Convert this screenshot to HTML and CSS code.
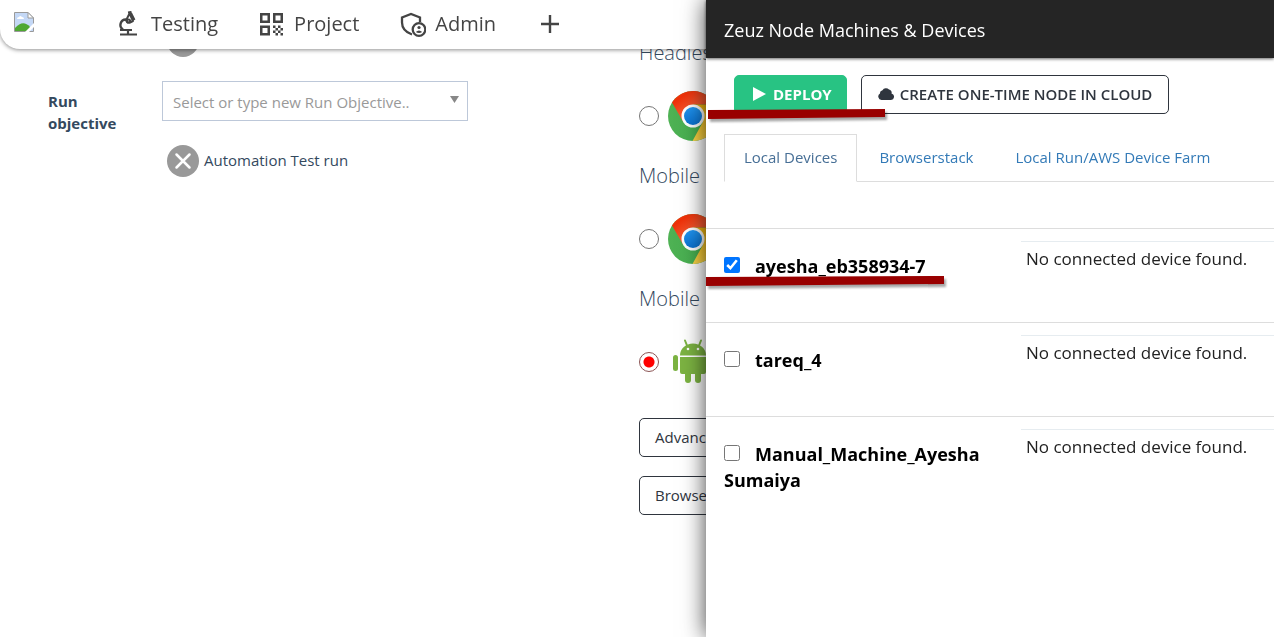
FILE: index.html
```html
<!DOCTYPE html>
<html lang="en">
<head>
<meta charset="utf-8">
<title>Zeuz Node Machines &amp; Devices</title>
<link rel="stylesheet" href="styles.css">
</head>
<body>
<svg class="defs" width="0" height="0" aria-hidden="true">
  <defs>
    <linearGradient id="red" x1="0" y1="0" x2="1" y2="1"><stop offset="0" stop-color="#ff4a1c"/><stop offset="0.2" stop-color="#ee3008"/><stop offset="0.5" stop-color="#f4572e"/></linearGradient>
    <linearGradient id="green" x1="0" y1="0" x2="1" y2="0"><stop offset="0" stop-color="#4fb254"/><stop offset="0.6" stop-color="#46ae50"/><stop offset="1" stop-color="#10964c"/></linearGradient>
    <linearGradient id="yellow" x1="0" y1="0" x2="0" y2="1"><stop offset="0" stop-color="#f2b50c"/><stop offset="1" stop-color="#fcd64a"/></linearGradient>
    <linearGradient id="blue" x1="0" y1="0" x2="0" y2="1"><stop offset="0" stop-color="#2196f3"/><stop offset="1" stop-color="#0b72d0"/></linearGradient>
    <symbol id="chrome" viewBox="0 0 50 50">
      <circle cx="25" cy="25" r="25" fill="url(#green)"/>
      <path d="M25 13.500H47.200A25 25 0 0 1 24.500 50L35 30.700Z" fill="url(#yellow)"/>
      <path d="M4 11.500A25 25 0 0 1 47.200 13.500H25L15 30.500Z" fill="url(#red)"/>
      <circle cx="25" cy="25" r="11.500" fill="#fff"/>
      <circle cx="25" cy="25" r="9" fill="url(#blue)"/>
    </symbol>
    <symbol id="remove" viewBox="0 0 32 32">
      <circle cx="16" cy="16" r="16" fill="#999"/>
      <path d="M9.500 9.500L22.500 22.500M22.500 9.500L9.500 22.500" stroke="#fff" stroke-width="2.500" stroke-linecap="round"/>
    </symbol>
  </defs>
</svg>

<header class="topbar">
  <a class="brand" href="#" aria-label="Home">
    <svg width="20" height="20" viewBox="0 0 20 20">
      <path d="M.500 .500H14L19.500 6V19.500H.500Z" fill="#c4d8f6" stroke="#9a9a9a"/>
      <path d="M3 7Q3 5 5 5Q6 3 8 5Q10 5 10 7Z" fill="#fff"/>
      <path d="M1 19V16Q9 7 16 15V19Z" fill="#4ea832"/>
      <path d="M14 .500V6H19.500Z" fill="#fff" stroke="#9a9a9a"/>
      <path d="M11 20L20 11V15L15 20Z" fill="#fff"/>
    </svg>
  </a>
  <nav class="menu">
    <a href="#">
      <svg width="26" height="26" viewBox="0 0 26 26" fill="none" stroke="#444" stroke-width="2">
        <path d="M5 23.500H22M5 19H17M13 19V23" stroke-width="2.200"/>
        <path d="M11 8.500A5.400 5.400 0 0 0 8 18.500" stroke-width="2.400"/>
        <path d="M14.500 2.500L11 9.500L12.500 11.500H15L18 10L14.500 2.500M16 2L19.500 9" stroke-linejoin="round"/>
        <path d="M13 1.500L16.500 1" stroke-width="2.200"/>
        <circle cx="13.500" cy="10" r="1.600"/>
      </svg>
      <span>Testing</span>
    </a>
    <a href="#">
      <svg width="26" height="26" viewBox="0 0 26 26" fill="none" stroke="#444" stroke-width="2.500">
        <path d="M2.250 3.250H9.750V10.750H2.250ZM15.250 3.250H22.750V10.750H15.250ZM2.250 15.750H9.750V23.250H2.250Z"/>
        <path d="M14 14.500h2.500v2.500h-2.500zM19 14.500h2.500v2.500h-2.500zM16.500 17h2.500v2.500h-2.500zM21.500 17h2.500v2.500h-2.500zM14 19.500h2.500V22h-2.500zM19 19.500h2.500V22h-2.500zM16.500 22h2.500v2.500h-2.500zM21.500 22h2.500v2.500h-2.500z" fill="#444" stroke="none"/>
      </svg>
      <span>Project</span>
    </a>
    <a href="#">
      <svg width="26" height="26" viewBox="0 0 26 26" fill="none" stroke="#444" stroke-width="2.300">
        <path d="M12 23.500C5 21 2 16 2 11.500V6.500L11 3L20 6.500V11"/>
        <circle cx="19" cy="18.500" r="6.300"/>
        <circle cx="19" cy="16.500" r="1.600" fill="#444" stroke="none"/>
        <path d="M15.800 21Q19 18 22.200 21Q19 23 15.800 21Z" fill="#444" stroke="none"/>
      </svg>
      <span>Admin</span>
    </a>
    <button class="add" type="button" aria-label="Add">
      <svg width="18" height="18" viewBox="0 0 18 18" stroke="#444" stroke-width="2.400"><path d="M9 0V18M0 9H18"/></svg>
    </button>
  </nav>
</header>

<main class="page">
  <section class="objective">
    <button class="remove first" type="button" aria-label="Remove"><svg width="32" height="32"><use href="#remove"/></svg></button>
    <label for="objective">Run objective</label>
    <div class="field">
      <div class="combo">
        <input id="objective" type="text" placeholder="Select or type new Run Objective..">
        <svg width="9" height="7" viewBox="0 0 9 7"><path d="M0 0H9L4.500 7Z" fill="#888"/></svg>
      </div>
      <div class="chosen">
        <button class="remove" type="button" aria-label="Remove Automation Test run"><svg width="32" height="32"><use href="#remove"/></svg></button>
        <span>Automation Test run</span>
      </div>
    </div>
  </section>
  <section class="targets">
    <h2 id="t1">Headless</h2>
    <div class="target"><input type="radio" name="target" aria-labelledby="t1"><svg width="50" height="50"><use href="#chrome"/></svg></div>
    <h2 id="t2">Mobile</h2>
    <div class="target"><input type="radio" name="target" aria-labelledby="t2"><svg width="50" height="50"><use href="#chrome"/></svg></div>
    <h2 id="t3">Mobile</h2>
    <div class="target"><input type="radio" name="target" aria-labelledby="t3" checked>
      <svg width="50" height="50" viewBox="0 0 50 50" fill="#7cb342">
        <path d="M12 18.500A13 12 0 0 1 38 18.500ZM12 20H38V35Q38 37 36 37H14Q12 37 12 35Z"/>
        <rect x="5" y="18" width="5" height="16" rx="2.500"/><rect x="40" y="18" width="5" height="16" rx="2.500"/>
        <rect x="17" y="32" width="6" height="14" rx="3"/><rect x="27" y="32" width="6" height="14" rx="3"/>
        <path d="M19 8.500L17 3.500M31 8.500L33 3.500" stroke="#7cb342" stroke-width="2" stroke-linecap="round"/>
        <circle cx="20" cy="12" r="1.300" fill="#fff"/><circle cx="30" cy="12" r="1.300" fill="#fff"/>
      </svg>
    </div>
    <button class="outline" type="button">Advanced</button>
    <button class="outline" type="button">Browser</button>
  </section>
</main>

<aside class="drawer">
  <h1>Zeuz Node Machines &amp; Devices</h1>
  <div class="actions">
    <button class="deploy" type="button"><svg width="13" height="14" viewBox="0 0 13 14"><path d="M0 0L13 7L0 14Z" fill="#fff"/></svg>DEPLOY</button>
    <button class="cloud" type="button"><svg width="16" height="12" viewBox="0 0 16 12"><path d="M3.500 12A3.500 3.500 0 0 1 2 5.500A3 3 0 0 1 4.500 2.200A4 4 0 0 1 11 1.500A3 3 0 0 1 13.500 5.500A3.300 3.300 0 0 1 13 12Z" fill="#2f353e"/></svg>CREATE ONE-TIME NODE IN CLOUD</button>
  </div>
  <nav class="tabs">
    <a class="active" href="#">Local Devices</a>
    <a href="#">Browserstack</a>
    <a href="#">Local Run/AWS Device Farm</a>
  </nav>
  <table class="nodes">
    <tbody>
      <tr><td class="node"><input id="n1" type="checkbox" checked><label for="n1">ayesha_eb358934-7</label></td><td class="device"><p>No connected device found.</p></td></tr>
      <tr><td class="node"><input id="n2" type="checkbox"><label for="n2">tareq_4</label></td><td class="device"><p>No connected device found.</p></td></tr>
      <tr><td class="node"><input id="n3" type="checkbox"><label for="n3">Manual_Machine_Ayesha Sumaiya</label></td><td class="device"><p>No connected device found.</p></td></tr>
    </tbody>
  </table>
  <svg class="mark mark-deploy" width="184" height="16" viewBox="0 0 184 16" aria-hidden="true"><path d="M2 2L179 1V9L2 11Z" fill="#900"/></svg>
  <svg class="mark mark-node" width="244" height="16" viewBox="0 0 244 16" aria-hidden="true"><path d="M0 2L238 1V9L0 11Z" fill="#900"/></svg>
</aside>
</body>
</html>
```
FILE: styles.css
```css
* { box-sizing: border-box; }
body {
  margin: 0;
  min-height: 100vh;
  overflow: hidden;
  background: #fff;
  color: #34495e;
  font: 15px/22px "Open Sans", "Noto Sans", sans-serif;
}
button, input { font: inherit; color: inherit; }
button { cursor: pointer; }
a { text-decoration: none; }
svg { flex: none; }
.defs { position: absolute; }

.topbar {
  position: fixed;
  inset: 0 0 auto;
  z-index: 2;
  display: flex;
  align-items: center;
  height: 49px;
  padding: 0 14px 2px;
  background: #fff;
  border-radius: 0 0 20px 20px;
  box-shadow: 0 1px 4px rgba(0, 0, 0, .45);
}
.brand { display: flex; width: 101px; padding-bottom: 4px; }
.menu { display: flex; align-items: center; gap: 41px; }
.menu a {
  display: flex;
  align-items: center;
  gap: 10px;
  color: #444;
  font-size: 20px;
  line-height: 28px;
}
.menu a + a { gap: 9px; }
.add { display: flex; padding: 0 4px; border: 0; background: none; }

.page { display: grid; grid-template-columns: 468px 1fr; gap: 171px; }
.objective {
  display: grid;
  grid-template-columns: 72px 1fr;
  column-gap: 42px;
  align-content: start;
  padding: 25px 0 0 48px;
}
.objective label { padding-top: 9px; color: #34495e; font-weight: 700; }
.remove { display: flex; padding: 0; border: 0; background: none; }
.first { grid-column: 2; margin: 0 0 24px 5px; }
.combo {
  display: flex;
  height: 40px;
  padding: 0 8px 0 10px;
  border: 1px solid #bdc8d9;
}
.combo input { flex: 1; min-width: 0; padding: 2px 0 0; border: 0; outline: 0; background: none; }
.combo input::placeholder { color: #999; opacity: 1; }
.combo svg { margin-top: 14px; }
.chosen { display: flex; align-items: center; gap: 5px; padding: 24px 0 0 5px; }
.chosen span { padding-bottom: 2px; }

.targets { padding-top: 39px; }
.targets h2 { margin: 0; font-size: 20px; line-height: 28px; font-weight: 300; }
.target { display: flex; align-items: center; gap: 9px; height: 50px; margin: 24px 0 21px; }
.target input {
  appearance: none;
  width: 20px;
  height: 20px;
  margin: 0;
  border: 1px solid #767676;
  border-radius: 50%;
}
.target input:checked { border-color: #8c5555; background: radial-gradient(circle, red 5px, transparent 6px); }
.outline {
  display: block;
  height: 39px;
  margin: 0 0 19px;
  padding: 0 15px 1px;
  border: 1px solid #2f353e;
  border-radius: 5px;
  background: #fff;
  color: #2f353e;
}
.target + .outline { margin-top: 31px; }

.drawer {
  position: fixed;
  inset: 0 0 0 706px;
  z-index: 3;
  background: #fff;
  box-shadow: 0 0 22px rgba(0, 0, 0, .75);
}
.drawer h1 {
  margin: 0;
  padding: 16px 18px 14px;
  background: #252525;
  color: #fff;
  font-size: 18px;
  line-height: 28px;
  font-weight: 500;
  box-shadow: 0 1px 3px rgba(0, 0, 0, .6);
}
.actions { display: flex; gap: 14px; padding: 17px 28px 20px; }
.actions button {
  display: flex;
  align-items: center;
  height: 39px;
  padding: 0 16px 2px;
  border: 1px solid #2f353e;
  border-radius: 5px;
  background: #fff;
  color: #2f353e;
  font-weight: 600;
  gap: 6px;
}
.actions .deploy { padding: 0 14px 2px 18px; border-color: #28c383; background: #28c383; color: #fff; font-weight: 700; gap: 7px; }
.tabs { display: flex; margin-left: 18px; border-bottom: 1px solid #ddd; }
.tabs a {
  margin-bottom: -1px;
  padding: 11px 19px 13px;
  border: 1px solid transparent;
  color: #337ab7;
}
.tabs a + a { margin-left: 2px; }
.tabs .active { border-color: #ddd #ddd #fff; color: #476f96; }

.nodes { width: 100%; margin-top: 46px; border-collapse: collapse; }
.nodes tr { border-top: 1px solid #ddd; }
.nodes td { height: 94px; padding: 12px 0; vertical-align: top; }
.nodes .node { width: 315px; padding: 24px 30px 0 18px; color: #000; font-size: 18px; line-height: 26px; font-weight: 700; }
.node input { width: 16px; height: 16px; margin: 0 15px 0 0; }
.device p { margin: 0; padding: 4px 5px; border-top: 1px solid #e6ecf0; color: #222; font-size: 17px; line-height: 26px; }

.mark { position: absolute; left: 0; filter: drop-shadow(2px 3px 1px rgba(0, 0, 0, .35)); }
.mark-deploy { top: 108px; }
.mark-node { top: 275px; }
```
